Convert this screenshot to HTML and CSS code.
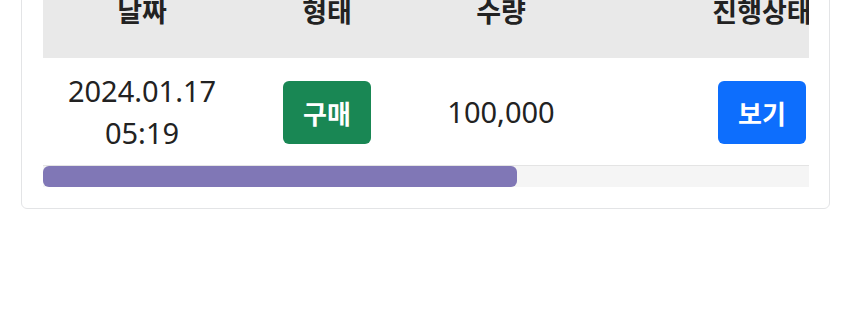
FILE: index.html
```html
<!DOCTYPE html>
<html lang="ko">
<head>
  <meta charset="UTF-8">
  <meta name="viewport" content="width=device-width, initial-scale=1.0">
  <title>거래 내역</title>
  <link rel="stylesheet" href="styles.css">
</head>
<body>
  <div class="page">
    <div class="card">
      <div class="table-wrap">
        <table class="history">
          <colgroup>
            <col class="col-date">
            <col class="col-type">
            <col class="col-amount">
            <col class="col-status">
            <col class="col-rest">
          </colgroup>
          <thead>
            <tr>
              <th>날짜</th>
              <th>형태</th>
              <th>수량</th>
              <th>진행상태</th>
              <th></th>
            </tr>
          </thead>
          <tbody>
            <tr>
              <td class="date">2024.01.17<br>05:19</td>
              <td><span class="btn btn-buy">구매</span></td>
              <td class="amount">100,000</td>
              <td><button class="btn btn-view">보기</button></td>
              <td></td>
            </tr>
          </tbody>
        </table>
      </div>
      <div class="scrollbar">
        <div class="scroll-thumb" style="width: 474px"></div>
      </div>
    </div>
  </div>
</body>
</html>
```

FILE: styles.css
```css
body {
  margin: 0;
  font-family: "Noto Sans", "Noto Sans CJK KR", sans-serif;
  background-color: #fff;
  color: #212529;
}
.page {
  padding: 0 20px 0 21px;
}
.card {
  margin-top: -58px;
  padding: 21px 20px 21px 21px;
  border: 1px solid #e3e4e6;
  border-radius: 6px;
  background-color: #fff;
}
.table-wrap {
  overflow: hidden;
}
.scrollbar {
  height: 21px;
  background-color: #f5f5f5;
}
.scroll-thumb {
  height: 100%;
  background-color: #8077b6;
  border-radius: 6px;
}
.history {
  width: 1238px;
  border-collapse: collapse;
  table-layout: fixed;
}
.col-date { width: 198px; }
.col-type { width: 172px; }
.col-amount { width: 176px; }
.col-status { width: 346px; }
.col-rest { width: 346px; }
.history th {
  background-color: #e9e9e9;
  padding: 28px 0;
  font-family: "Noto Sans CJK KR", sans-serif;
  font-size: 27px;
  line-height: 38px;
  font-weight: 700;
  color: #222;
  text-align: center;
  white-space: nowrap;
}
.history td {
  padding: 12px 0 11px;
  text-align: center;
  vertical-align: middle;
  border-bottom: 1px solid #e4e4e4;
  font-size: 29px;
  line-height: 42px;
  color: #222;
}
.btn {
  display: inline-block;
  padding: 12px 20px;
  border: none;
  border-radius: 6px;
  font-family: "Noto Sans CJK KR", sans-serif;
  font-size: 26px;
  line-height: 39px;
  font-weight: 700;
  color: #fff;
}
.btn-buy {
  background-color: #198754;
}
.btn-view {
  background-color: #0d6efd;
  cursor: pointer;
}
```
